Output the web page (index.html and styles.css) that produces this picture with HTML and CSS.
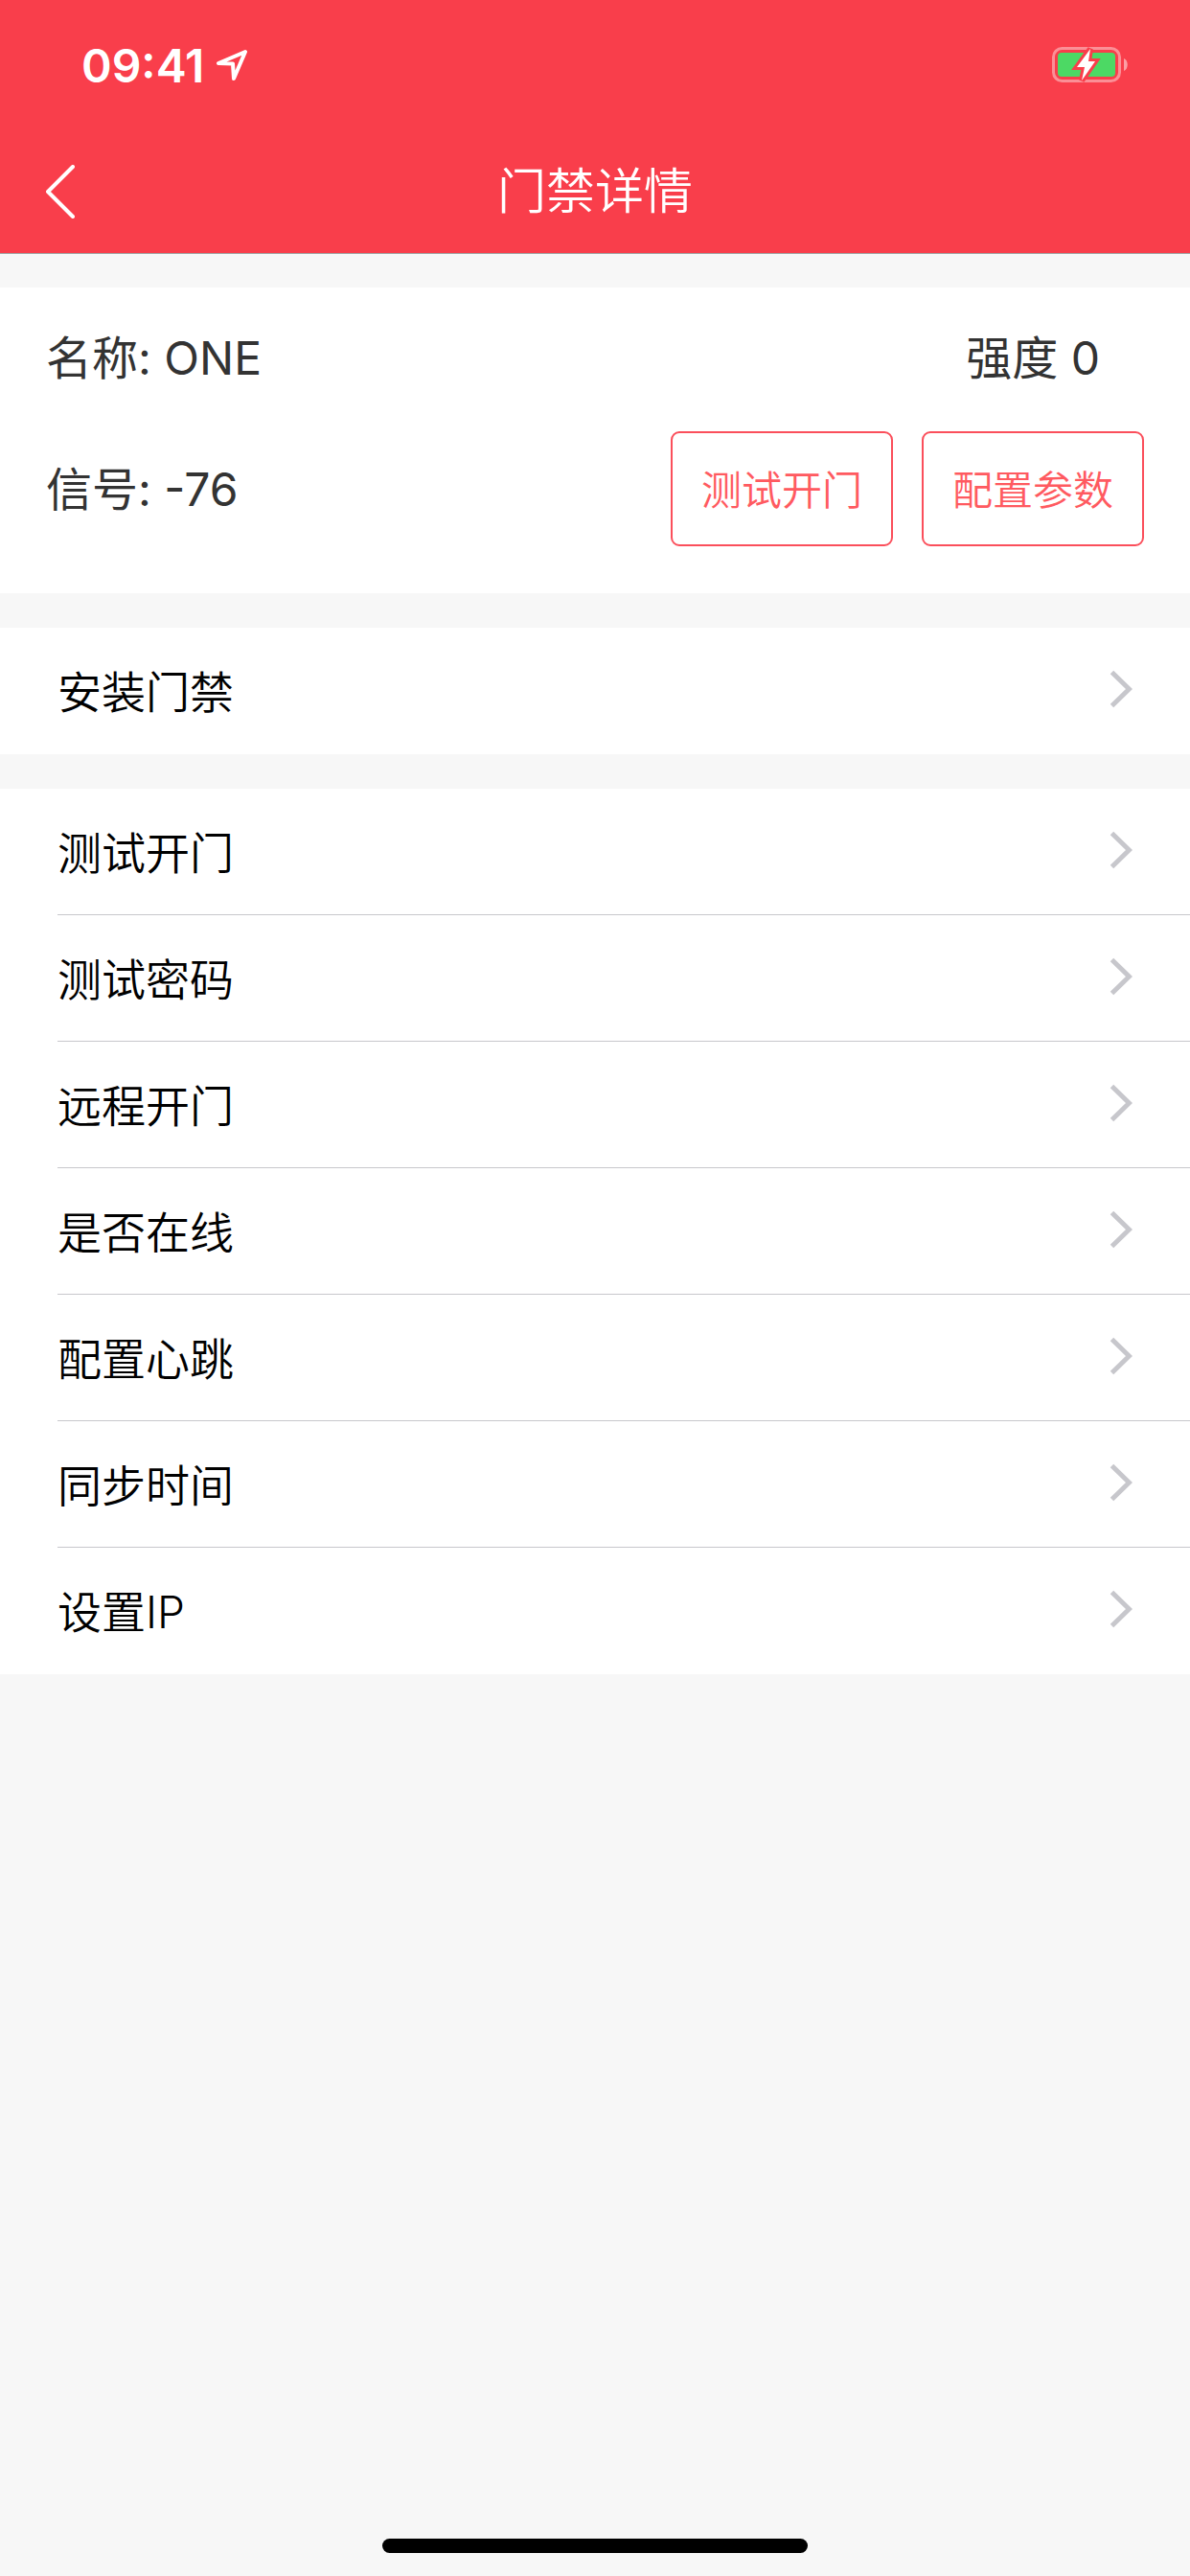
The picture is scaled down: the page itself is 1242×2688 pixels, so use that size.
FILE: index.html
```
<!DOCTYPE html>
<html lang="zh-CN">
<head>
    <meta charset="UTF-8">
    <meta name="viewport" content="width=device-width, initial-scale=1.0">
    <title>门禁详情</title>
    <link rel="stylesheet" href="styles.css">
</head>
<body>
    <!-- chevron shared by every list row -->
    <svg class="sprite" width="0" height="0" aria-hidden="true">
        <symbol id="chevron" viewBox="0 0 24 40">
            <path d="M2.5 2.5 L20.5 20 L2.5 37.5" fill="none" stroke="#c7c7cc" stroke-width="5"/>
        </symbol>
    </svg>

    <header class="header">
        <div class="status-bar">
            <div class="clock">
                <span>09:41</span>
                <svg width="34" height="34" viewBox="0 0 34 34" aria-hidden="true">
                    <path d="M31 3 L3 15 L18 15.5 L19 31 Z" fill="none" stroke="#fff" stroke-width="4" stroke-linejoin="round"/>
                </svg>
            </div>
            <svg width="80" height="38" viewBox="0 0 80 38" aria-hidden="true">
                <rect x="1.5" y="1.5" width="69" height="34" rx="9" fill="none" stroke="#fff" stroke-opacity="0.42" stroke-width="3"/>
                <path d="M75 12 C80 14 80 23 75 25 Z" fill="#fff" fill-opacity="0.5"/>
                <rect x="6" y="6" width="60" height="25" rx="4" fill="#4cd964"/>
                <path d="M40 2 L26 21 L34 21 L31 35 L45 15 L38 15 Z" fill="#fff" stroke="#f93e4b" stroke-width="6" paint-order="stroke"/>
            </svg>
        </div>
        <nav class="nav-bar">
            <button class="back" type="button" aria-label="返回">
                <svg width="32" height="56" viewBox="0 0 32 56" aria-hidden="true">
                    <path d="M28 2 L2 28 L28 54" fill="none" stroke="#fff" stroke-width="4" stroke-linecap="round" stroke-linejoin="round"/>
                </svg>
            </button>
            <h1 class="title">门禁详情</h1>
        </nav>
    </header>

    <main class="content">
        <section class="card device">
            <div class="device-row">
                <span class="label">名称: ONE</span>
                <span class="label strength">强度 0</span>
            </div>
            <div class="device-row">
                <span class="label">信号: -76</span>
                <div class="actions">
                    <button class="outline-btn" type="button">测试开门</button>
                    <button class="outline-btn" type="button">配置参数</button>
                </div>
            </div>
        </section>

        <ul class="card list">
            <li><a class="row" href="#install">安装门禁<svg class="arrow"><use href="#chevron"/></svg></a></li>
        </ul>

        <ul class="card list">
            <li><a class="row" href="#open">测试开门<svg class="arrow"><use href="#chevron"/></svg></a></li>
            <li><a class="row" href="#password">测试密码<svg class="arrow"><use href="#chevron"/></svg></a></li>
            <li><a class="row" href="#remote">远程开门<svg class="arrow"><use href="#chevron"/></svg></a></li>
            <li><a class="row" href="#online">是否在线<svg class="arrow"><use href="#chevron"/></svg></a></li>
            <li><a class="row" href="#heartbeat">配置心跳<svg class="arrow"><use href="#chevron"/></svg></a></li>
            <li><a class="row" href="#time">同步时间<svg class="arrow"><use href="#chevron"/></svg></a></li>
            <li><a class="row" href="#ip">设置IP<svg class="arrow"><use href="#chevron"/></svg></a></li>
        </ul>
    </main>

    <footer class="home">
        <div class="home-indicator"></div>
    </footer>
</body>
</html>
```
FILE: styles.css
```
* {
    box-sizing: border-box;
}

body {
    margin: 0;
    min-height: 100vh;
    display: flex;
    flex-direction: column;
    background-color: #f7f7f7;
    color: #000;
    font-family: Inter, "Noto Sans CJK SC", sans-serif;
    font-size: 46px;
}

button {
    font-family: inherit;
    background: none;
    cursor: pointer;
}

.sprite {
    display: none;
}

/* Header */
.header {
    background-color: #f93e4b;
    color: #fff;
    border-bottom: 1px solid #a0a0a0;
}

.status-bar {
    display: flex;
    justify-content: space-between;
    align-items: center;
    height: 132px;
    padding: 4px 64px 0 85px;
}

.clock {
    display: flex;
    align-items: center;
    gap: 12px;
    font-size: 48px;
    font-weight: 600;
}

.nav-bar {
    display: grid;
    grid-template-columns: 1fr auto 1fr;
    align-items: center;
    height: 132px;
    padding: 0 48px 4px;
}

.back {
    justify-self: start;
    display: flex;
    padding: 8px 0 0;
    border: none;
}

.title {
    margin: 0;
    font-size: 51px;
    font-weight: 350;
}

/* Content */
.content {
    flex: 1;
    display: flex;
    flex-direction: column;
    gap: 36px;
    padding-top: 35px;
}

.card {
    background-color: #fff;
}

.device {
    display: flex;
    flex-direction: column;
    gap: 40px;
    padding: 36px 48px 49px;
    color: #333;
    font-size: 48px;
    line-height: 72px;
}

.device-row {
    display: flex;
    justify-content: space-between;
    align-items: center;
}

.label {
    padding-top: 2px;
}

.strength {
    padding-right: 46px;
}

.actions {
    display: flex;
    gap: 30px;
}

.outline-btn {
    height: 120px;
    padding: 0 30px 4px;
    border: 2px solid #fb4f5b;
    border-radius: 9px;
    color: #ff5a60;
    font-size: 42px;
    font-weight: 350;
}

/* List */
.list {
    list-style: none;
    margin: 0;
    padding: 0 0 0 60px;
    font-weight: 350;
}

.row {
    display: flex;
    justify-content: space-between;
    align-items: center;
    height: 132px;
    padding: 0 60px 4px 0;
    color: #000;
    text-decoration: none;
}

.list li + li .row {
    box-shadow: 0 -1px #c8c7cc;
}

.arrow {
    width: 24px;
    height: 40px;
}

/* Home indicator */
.home {
    display: flex;
    justify-content: center;
    padding-bottom: 24px;
}

.home-indicator {
    width: 444px;
    height: 15px;
    border-radius: 8px;
    background-color: #000;
}
```
